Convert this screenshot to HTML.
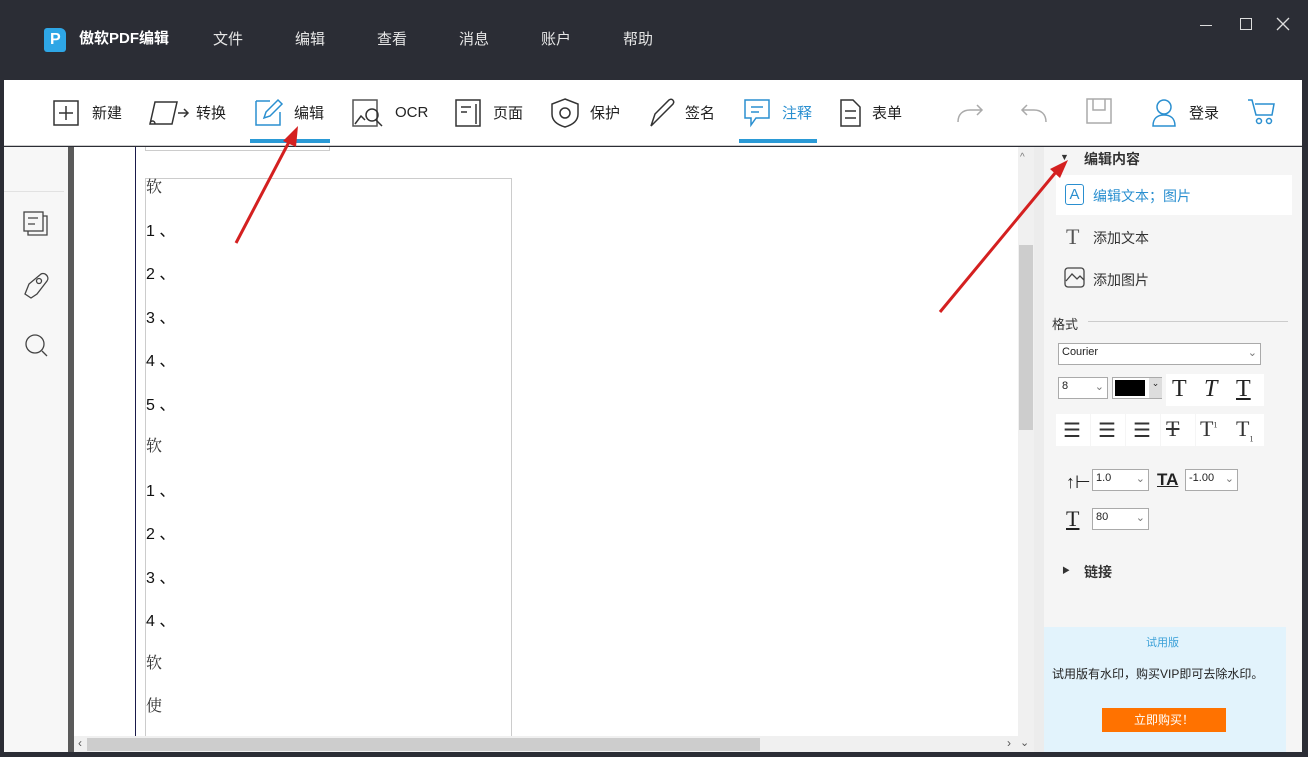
<!DOCTYPE html>
<html><head><meta charset="utf-8"><style>
*{margin:0;padding:0;box-sizing:border-box}
body{width:1308px;height:757px;overflow:hidden;background:#2b2d35;font-family:"Liberation Sans","Noto Sans CJK SC",sans-serif;position:relative;color:#222}
.a{position:absolute}
.menu{color:#e6e6e6;font-size:15px;top:28px}
.tb{font-size:15px;top:102px;color:#222}
.doc{font-family:"Liberation Serif","Noto Serif CJK SC",serif;font-size:16px;color:#333;left:146px}
.num{font-family:"Liberation Sans","Noto Sans CJK SC",sans-serif;font-size:16px;color:#111;left:146px}
.sel{background:#fff;border:1px solid #aaa;font-size:11px;padding:2px 3px;height:22px}
.btn{background:#fff;width:34px;height:32px}
</style></head><body>
<!-- title -->
<div class="a" style="left:44px;top:28px;width:22px;height:24px;background:#2ea6e6;border-radius:3px 6px 3px 3px"></div>
<div class="a" style="left:50px;top:31px;color:#fff;font-weight:bold;font-size:16px">P</div>
<div class="a" style="left:79px;top:27px;color:#fff;font-weight:bold;font-size:15px">傲软PDF编辑</div>
<div class="a menu" style="left:213px">文件</div>
<div class="a menu" style="left:295px">编辑</div>
<div class="a menu" style="left:377px">查看</div>
<div class="a menu" style="left:459px">消息</div>
<div class="a menu" style="left:541px">账户</div>
<div class="a menu" style="left:623px">帮助</div>
<div class="a" style="left:1200px;top:25px;width:12px;height:1px;background:#ddd"></div>
<div class="a" style="left:1240px;top:18px;width:12px;height:12px;border:1px solid #ddd"></div>
<svg class="a" style="left:1276px;top:17px" width="14" height="14" stroke="#ddd" stroke-width="1.3"><path d="M1 1l12 12M13 1L1 13"/></svg>
<!-- toolbar -->
<div class="a" style="left:4px;top:80px;width:1298px;height:66px;background:#fff;border-bottom:1px solid #ccc"></div>
<svg class="a" style="left:0;top:80px" width="1308" height="66" fill="none" stroke="#333" stroke-width="1.5">
<rect x="54" y="21" width="24" height="24"/><path d="M66 26v14M59 33h14"/>
<path d="M155 22h22l-5 22h-22zM150 44c0-4 5-4 5 0M178 33h10m-4-4l4 4-4 4"/>
<g stroke="#2a8fd0"><path d="M256 21h14M256 21v24h24V32"/><path d="M264 38l2-6 12-12 4 4-12 12z"/></g>
<rect x="353" y="20" width="24" height="26" stroke="#555"/><circle cx="372" cy="35" r="6"/><path d="M376 40l6 6M355 44l6-8 4 4"/>
<rect x="456" y="20" width="24" height="26"/><path d="M461 27h10M461 32h6M476 24v20"/>
<path d="M565 19l13 5v10c0 7-6 11-13 13-7-2-13-6-13-13V24z"/><circle cx="565" cy="33" r="5"/>
<path d="M651 46l4-12 14-14c3-2 6 1 4 4l-14 14zM651 46l3-3"/>
<g stroke="#2a8fd0"><path d="M745 20h24v18h-13l-5 7v-7h-6z"/><path d="M751 27h12M751 32h8"/></g>
<path d="M841 20h12l7 7v19h-19zM845 31h11M845 38h11"/>
<g stroke="#aaa"><path d="M958 42c0-8 5-12 12-12h12m-5-5l5 5-5 5"/><path d="M1046 42c0-8-5-12-12-12h-12m5-5l-5 5 5 5"/><rect x="1087" y="19" width="24" height="24"/><path d="M1093 19v11h12V19"/></g>
<g stroke="#2a8fd0"><circle cx="1164" cy="27" r="7"/><path d="M1153 46c0-8 5-11 11-11s11 3 11 11z"/><path d="M1248 20h4l4 15h16l2-11h-19"/><circle cx="1259" cy="41" r="2.5"/><circle cx="1269" cy="41" r="2.5"/></g>
</svg>
<div class="a tb" style="left:92px">新建</div>
<div class="a tb" style="left:196px">转换</div>
<div class="a tb" style="left:294px">编辑</div>
<div class="a tb" style="left:395px;top:104px">OCR</div>
<div class="a tb" style="left:493px">页面</div>
<div class="a tb" style="left:590px">保护</div>
<div class="a tb" style="left:685px">签名</div>
<div class="a tb" style="left:782px;color:#2a8fd0">注释</div>
<div class="a tb" style="left:872px">表单</div>
<div class="a tb" style="left:1189px">登录</div>
<div class="a" style="left:250px;top:139px;width:80px;height:4px;background:#2a9ad6"></div>
<div class="a" style="left:739px;top:139px;width:78px;height:4px;background:#2a9ad6"></div>
<!-- left panel -->
<div class="a" style="left:4px;top:147px;width:64px;height:605px;background:#f7f7f7"></div>
<div class="a" style="left:4px;top:191px;width:60px;height:1px;background:#e2e2e2"></div>
<svg class="a" style="left:20px;top:208px" width="36" height="160" fill="none" stroke="#444" stroke-width="1.3">
<rect x="4" y="4" width="19" height="19"/><path d="M8 10h10M8 16h7M23 8h4v19H8v-4"/>
<path d="M5 86l4-10 12-10c4-2 9 3 6 7L17 86l-6 4z"/><circle cx="19" cy="73" r="2.5"/>
<circle cx="15" cy="136" r="9"/><path d="M22 143l5 5"/>
</svg>
<div class="a" style="left:68px;top:147px;width:6px;height:605px;background:#5a5a5a"></div>
<!-- content -->
<div class="a" style="left:74px;top:147px;width:944px;height:589px;background:#fff"></div>
<div class="a" style="left:135px;top:147px;width:1px;height:589px;background:#1a1a4a"></div>
<div class="a" style="left:145px;top:147px;width:185px;height:4px;border:1px solid #ccc;border-top:none"></div>
<div class="a" style="left:145px;top:178px;width:367px;height:560px;border:1px solid #ccc;border-bottom:none"></div>
<div class="a doc" style="top:174px">软</div>
<div class="a num" style="top:217px">1 、</div>
<div class="a num" style="top:260px">2 、</div>
<div class="a num" style="top:304px">3 、</div>
<div class="a num" style="top:347px">4 、</div>
<div class="a num" style="top:391px">5 、</div>
<div class="a doc" style="top:433px">软</div>
<div class="a num" style="top:477px">1 、</div>
<div class="a num" style="top:520px">2 、</div>
<div class="a num" style="top:564px">3 、</div>
<div class="a num" style="top:607px">4 、</div>
<div class="a doc" style="top:650px">软</div>
<div class="a doc" style="top:693px">使</div>
<!-- scrollbars -->
<div class="a" style="left:1018px;top:147px;width:16px;height:605px;background:#f0f0f0"></div>
<div class="a" style="left:1019px;top:245px;width:14px;height:185px;background:#cdcdcd"></div>
<div class="a" style="left:1020px;top:152px;font-size:10px;color:#777">^</div>
<div class="a" style="left:74px;top:736px;width:944px;height:16px;background:#f0f0f0"></div>
<div class="a" style="left:87px;top:738px;width:673px;height:13px;background:#cdcdcd"></div>
<div class="a" style="left:78px;top:736px;font-size:12px;color:#555">‹</div>
<div class="a" style="left:1007px;top:736px;font-size:12px;color:#555">›</div>
<div class="a" style="left:1020px;top:736px;font-size:11px;color:#555">⌄</div>
<!-- right panel -->
<div class="a" style="left:1034px;top:147px;width:10px;height:605px;background:#ececec"></div>
<div class="a" style="left:1044px;top:147px;width:258px;height:605px;background:#f5f5f5"></div>
<div class="a" style="left:1060px;top:152px;font-size:9px;color:#333">▼</div>
<div class="a" style="left:1084px;top:149px;font-size:14px;font-weight:bold;color:#333">编辑内容</div>
<div class="a" style="left:1056px;top:175px;width:236px;height:40px;background:#fff"></div>
<div class="a" style="left:1065px;top:184px;width:19px;height:21px;border:1.5px solid #2a8fd0;border-radius:3px;color:#2a8fd0;font-size:15px;text-align:center;line-height:19px">A</div>
<div class="a" style="left:1093px;top:186px;font-size:14px;color:#2a8fd0">编辑文本；图片</div>
<div class="a" style="left:1066px;top:224px;font-size:22px;color:#555;font-family:'Liberation Serif',serif">T</div>
<div class="a" style="left:1093px;top:228px;font-size:14px;color:#333">添加文本</div>
<svg class="a" style="left:1064px;top:267px" width="22" height="22" fill="none" stroke="#444" stroke-width="1.3"><rect x="1" y="1" width="19" height="19" rx="3"/><path d="M2 14l6-7 5 5 3-3 4 4"/></svg>
<div class="a" style="left:1093px;top:270px;font-size:14px;color:#333">添加图片</div>
<div class="a" style="left:1052px;top:314px;font-size:13px;color:#333">格式</div>
<div class="a" style="left:1088px;top:321px;width:200px;height:1px;background:#ccc"></div>
<div class="a sel" style="left:1058px;top:343px;width:203px">Courier<span style="float:right;color:#777">⌄</span></div>
<div class="a sel" style="left:1058px;top:377px;width:50px">8<span style="float:right;color:#777">⌄</span></div>
<div class="a" style="left:1112px;top:377px;width:50px;height:22px;border:1px solid #aaa;background:#fff"><div style="margin:2px;width:30px;height:16px;background:#000"></div><div class="a" style="left:36px;top:0;width:13px;height:20px;background:#ddd;font-size:9px;text-align:center">⌄</div></div>
<div class="a btn" style="left:1166px;top:374px"></div><div class="a btn" style="left:1198px;top:374px"></div><div class="a btn" style="left:1230px;top:374px"></div>
<div class="a" style="left:1172px;top:376px;font-size:24px;font-family:'Liberation Serif',serif;color:#222">T</div>
<div class="a" style="left:1204px;top:376px;font-size:24px;font-family:'Liberation Serif',serif;font-style:italic;color:#222">T</div>
<div class="a" style="left:1236px;top:376px;font-size:24px;font-family:'Liberation Serif',serif;text-decoration:underline;color:#222">T</div>
<div class="a btn" style="left:1056px;top:414px"></div><div class="a btn" style="left:1091px;top:414px"></div><div class="a btn" style="left:1126px;top:414px"></div><div class="a btn" style="left:1161px;top:414px"></div><div class="a btn" style="left:1196px;top:414px"></div><div class="a btn" style="left:1230px;top:414px"></div>
<div class="a" style="left:1063px;top:418px;font-size:20px;color:#333">☰</div>
<div class="a" style="left:1098px;top:418px;font-size:20px;color:#333">☰</div>
<div class="a" style="left:1133px;top:418px;font-size:20px;color:#333">☰</div>
<div class="a" style="left:1166px;top:416px;font-size:22px;font-family:'Liberation Serif',serif;text-decoration:line-through;color:#333">T</div>
<div class="a" style="left:1200px;top:416px;font-size:22px;font-family:'Liberation Serif',serif;color:#333">T<sup style="font-size:8px">1</sup></div>
<div class="a" style="left:1236px;top:416px;font-size:22px;font-family:'Liberation Serif',serif;color:#333">T<sub style="font-size:8px">1</sub></div>
<div class="a" style="left:1066px;top:472px;font-size:18px;color:#222">↑⊢</div>
<div class="a sel" style="left:1092px;top:469px;width:57px">1.0<span style="float:right;color:#777">⌄</span></div>
<div class="a" style="left:1157px;top:470px;font-size:17px;font-weight:bold;color:#222;text-decoration:underline">TA</div>
<div class="a sel" style="left:1185px;top:469px;width:53px">-1.00<span style="float:right;color:#777">⌄</span></div>
<div class="a" style="left:1066px;top:506px;font-size:22px;font-family:'Liberation Serif',serif;text-decoration:underline;color:#222">T</div>
<div class="a sel" style="left:1092px;top:508px;width:57px">80<span style="float:right;color:#777">⌄</span></div>
<div class="a" style="left:1062px;top:565px;font-size:8px;color:#333">▶</div>
<div class="a" style="left:1084px;top:562px;font-size:14px;font-weight:bold;color:#333">链接</div>
<div class="a" style="left:1044px;top:627px;width:242px;height:125px;background:#e2f3fc"></div>
<div class="a" style="left:1146px;top:634px;font-size:11px;color:#3aa0d8">试用版</div>
<div class="a" style="left:1052px;top:665px;font-size:12px;color:#222">试用版有水印，购买VIP即可去除水印。</div>
<div class="a" style="left:1102px;top:708px;width:124px;height:24px;background:#ff7200;color:#fff;font-size:12px;text-align:center;line-height:24px">立即购买！</div>
<!-- arrows -->
<svg class="a" style="left:0;top:0" width="1308" height="757">
<g stroke="#d42020" stroke-width="3" fill="#d42020">
<path d="M236 243L290 140"/><path d="M298 126l-15 15 13 6z" stroke="none"/>
<path d="M940 312L1056 172"/><path d="M1068 160l-18 9 10 9z" stroke="none"/>
</g></svg>
</body></html>
